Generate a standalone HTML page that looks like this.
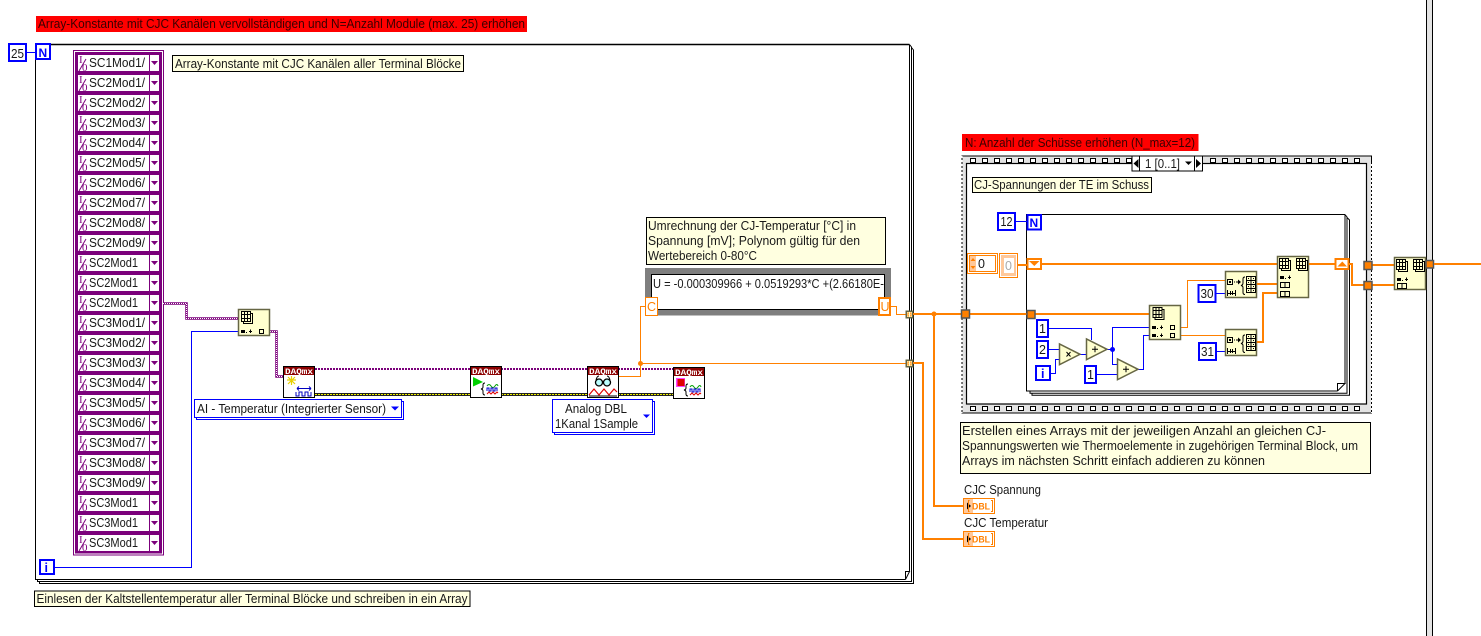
<!DOCTYPE html>
<html><head><meta charset="utf-8"><style>
html,body{margin:0;padding:0;background:#fff;width:1481px;height:636px;overflow:hidden}
svg{display:block}
text{font-family:"Liberation Sans",sans-serif;font-size:12.5px;fill:#181818}
.d{font-family:"Liberation Mono",monospace;font-size:8.5px;font-weight:bold;fill:#fff}
.io{font-family:"Liberation Serif",serif;font-size:11px;fill:#7b007b}
.r{fill:#3a0000}
.c{fill:#fff;stroke:#0000ff;stroke-width:2}
.n{fill:#ffffcf;stroke:#666644;stroke-width:1.5}
.cm{fill:#ffffe0;stroke:#000;stroke-width:1}
.o{fill:none;stroke:#ff8000}
.b{fill:none;stroke:#0000ff;stroke-width:1}
.k{fill:none;stroke:#000;stroke-width:1}
.t{fill:#ff8000;stroke:#555;stroke-width:1.5}
</style></head><body>
<svg width="1481" height="636" viewBox="0 0 1481 636" xmlns="http://www.w3.org/2000/svg">
<defs>
<g id="row"><rect x="78" y="55" width="81" height="16" fill="#fff"/><path d="M149.500 55v16" stroke="#7b007b"/><path d="M151 61h7l-3.500 4z" fill="#7b007b"/><path d="M79 71L86 59" stroke="#7b007b"/></g>
<g id="arr"><rect x="2.500" y="2.500" width="9" height="10" fill="#ffffcf" stroke="#000"/><rect x=".5" y=".5" width="9" height="10" fill="#ffffcf" stroke="#000"/><path d="M3.500 .5v10M6.500 .5v10M.5 3.500h9M.5 7.500h9" stroke="#000"/></g>
<g id="ins"><rect x="0" y="0" width="4" height="3" fill="#000"/><rect x="5" y="2" width="1" height="1" fill="#000"/><path d="M8 1.500h3M9.500 -.5v3.500" stroke="#000"/></g>
<g id="res"><rect x="2.500" y="8.500" width="5" height="5" fill="none" stroke="#000"/><rect x="4" y="10" width="2" height="2"/><path d="M9 11h1M11 11h3" stroke="#000"/><path d="M13 8.500l3 2.500-3 2.500z"/><path d="M2.500 19v6M2.500 22.500h8M10.500 19v6M5.500 20v4M7.500 20v4" stroke="#000" fill="none"/><path d="M20 6q-2 0-2 2v4q0 2-2 2.500q2 .5 2 2v5q0 2 2 2" stroke="#000" fill="none"/><rect x="21.500" y="5.500" width="9" height="16" fill="#ffffcf" stroke="#000"/><path d="M26 5.500v16M21.500 9.500h9M21.500 13.500h9M21.500 17.500h9" stroke="#000"/><rect x="23" y="7" width="1" height="1"/><rect x="28" y="7" width="1" height="1"/><rect x="23" y="11" width="1" height="1"/><rect x="28" y="11" width="1" height="1"/><rect x="23" y="15" width="1" height="1"/><rect x="28" y="15" width="1" height="1"/><rect x="23" y="19" width="1" height="1"/><rect x="28" y="19" width="1" height="1"/></g>
<g id="wav"><path d="M-6 1q-2 0-2 2v2q0 1.500-2 2q2 .5 2 2v2q0 2 2 2" stroke="#000" fill="none"/><path d="M-4 4q2-3 4 0t4 0 3 0" stroke="#00a000" fill="none"/><path d="M-4 9v-3h2v3h2v-3h2v3h2v-3h2v3" stroke="#0000d0" fill="none"/><path d="M-4 12l2-2 2 2 2-2 2 2 2-2 1 1" stroke="#e00000" fill="none"/></g>
<g id="tn"><rect x=".75" y=".75" width="6.500" height="6.500" fill="#ffffcf" stroke="#666644" stroke-width="1.500"/><path d="M3.500 2.500h-1v3h1M4.500 2.500h1v3h-1" stroke="#ff8000" fill="none"/></g>
</defs>

<!-- top red comment -->
<rect x="36" y="16" width="491" height="16" fill="#ff0000"/>
<text class="r" x="38" y="28" textLength="487" lengthAdjust="spacingAndGlyphs">Array-Konstante mit CJC Kanälen vervollständigen und N=Anzahl Module (max. 25) erhöhen</text>

<!-- far right band -->
<rect x="1426" y="0" width="7" height="636" fill="#e3e3e3"/>
<path d="M1426.500 0V636M1432.500 0V636" stroke="#000"/>

<!-- for loop frame -->
<path d="M909.500 44.500H35.500V579.500H905.500" class="k" stroke-width="1.500"/>
<path d="M909.500 44.500V571.500M909.500 44.500L911.500 47V581.500H37.500V579.500M911.500 47.500L913.500 50V583.500H39.500V581.500M905.500 579.500V571.500H909.500L905.500 579.500" class="k" stroke-width="1"/>
<path d="M35.500 44.500H909.500" stroke="#000" stroke-width="1.500"/>

<!-- N terminal and count -->
<rect x="9" y="44" width="17" height="17" class="c"/>
<text x="11" y="58" textLength="13" lengthAdjust="spacingAndGlyphs">25</text>
<path d="M26 52.500h10" class="b"/>
<rect x="36" y="44" width="14" height="15" fill="#fff" class="c"/>
<text x="38.500" y="57" style="font-weight:bold;fill:#0000ff;font-size:12px">N</text>

<!-- array constant -->
<rect x="73.500" y="50.500" width="90" height="504.500" fill="#fff" stroke="#7b007b"/>
<rect x="75" y="52" width="87" height="501.500" fill="#7b007b"/>
<g><use href="#row"/><text class="io" x="79" y="63">I</text><text class="io" x="82" y="71">0</text><text x="89" y="67" textLength="56" lengthAdjust="spacingAndGlyphs">SC1Mod1/</text></g>
<g transform="translate(0,20)"><use href="#row"/><text class="io" x="79" y="63">I</text><text class="io" x="82" y="71">0</text><text x="89" y="67" textLength="56" lengthAdjust="spacingAndGlyphs">SC2Mod1/</text></g>
<g transform="translate(0,40)"><use href="#row"/><text class="io" x="79" y="63">I</text><text class="io" x="82" y="71">0</text><text x="89" y="67" textLength="56" lengthAdjust="spacingAndGlyphs">SC2Mod2/</text></g>
<g transform="translate(0,60)"><use href="#row"/><text class="io" x="79" y="63">I</text><text class="io" x="82" y="71">0</text><text x="89" y="67" textLength="56" lengthAdjust="spacingAndGlyphs">SC2Mod3/</text></g>
<g transform="translate(0,80)"><use href="#row"/><text class="io" x="79" y="63">I</text><text class="io" x="82" y="71">0</text><text x="89" y="67" textLength="56" lengthAdjust="spacingAndGlyphs">SC2Mod4/</text></g>
<g transform="translate(0,100)"><use href="#row"/><text class="io" x="79" y="63">I</text><text class="io" x="82" y="71">0</text><text x="89" y="67" textLength="56" lengthAdjust="spacingAndGlyphs">SC2Mod5/</text></g>
<g transform="translate(0,120)"><use href="#row"/><text class="io" x="79" y="63">I</text><text class="io" x="82" y="71">0</text><text x="89" y="67" textLength="56" lengthAdjust="spacingAndGlyphs">SC2Mod6/</text></g>
<g transform="translate(0,140)"><use href="#row"/><text class="io" x="79" y="63">I</text><text class="io" x="82" y="71">0</text><text x="89" y="67" textLength="56" lengthAdjust="spacingAndGlyphs">SC2Mod7/</text></g>
<g transform="translate(0,160)"><use href="#row"/><text class="io" x="79" y="63">I</text><text class="io" x="82" y="71">0</text><text x="89" y="67" textLength="56" lengthAdjust="spacingAndGlyphs">SC2Mod8/</text></g>
<g transform="translate(0,180)"><use href="#row"/><text class="io" x="79" y="63">I</text><text class="io" x="82" y="71">0</text><text x="89" y="67" textLength="56" lengthAdjust="spacingAndGlyphs">SC2Mod9/</text></g>
<g transform="translate(0,200)"><use href="#row"/><text class="io" x="79" y="63">I</text><text class="io" x="82" y="71">0</text><text x="89" y="67" textLength="49" lengthAdjust="spacingAndGlyphs">SC2Mod1</text></g>
<g transform="translate(0,220)"><use href="#row"/><text class="io" x="79" y="63">I</text><text class="io" x="82" y="71">0</text><text x="89" y="67" textLength="49" lengthAdjust="spacingAndGlyphs">SC2Mod1</text></g>
<g transform="translate(0,240)"><use href="#row"/><text class="io" x="79" y="63">I</text><text class="io" x="82" y="71">0</text><text x="89" y="67" textLength="49" lengthAdjust="spacingAndGlyphs">SC2Mod1</text></g>
<g transform="translate(0,260)"><use href="#row"/><text class="io" x="79" y="63">I</text><text class="io" x="82" y="71">0</text><text x="89" y="67" textLength="56" lengthAdjust="spacingAndGlyphs">SC3Mod1/</text></g>
<g transform="translate(0,280)"><use href="#row"/><text class="io" x="79" y="63">I</text><text class="io" x="82" y="71">0</text><text x="89" y="67" textLength="56" lengthAdjust="spacingAndGlyphs">SC3Mod2/</text></g>
<g transform="translate(0,300)"><use href="#row"/><text class="io" x="79" y="63">I</text><text class="io" x="82" y="71">0</text><text x="89" y="67" textLength="56" lengthAdjust="spacingAndGlyphs">SC3Mod3/</text></g>
<g transform="translate(0,320)"><use href="#row"/><text class="io" x="79" y="63">I</text><text class="io" x="82" y="71">0</text><text x="89" y="67" textLength="56" lengthAdjust="spacingAndGlyphs">SC3Mod4/</text></g>
<g transform="translate(0,340)"><use href="#row"/><text class="io" x="79" y="63">I</text><text class="io" x="82" y="71">0</text><text x="89" y="67" textLength="56" lengthAdjust="spacingAndGlyphs">SC3Mod5/</text></g>
<g transform="translate(0,360)"><use href="#row"/><text class="io" x="79" y="63">I</text><text class="io" x="82" y="71">0</text><text x="89" y="67" textLength="56" lengthAdjust="spacingAndGlyphs">SC3Mod6/</text></g>
<g transform="translate(0,380)"><use href="#row"/><text class="io" x="79" y="63">I</text><text class="io" x="82" y="71">0</text><text x="89" y="67" textLength="56" lengthAdjust="spacingAndGlyphs">SC3Mod7/</text></g>
<g transform="translate(0,400)"><use href="#row"/><text class="io" x="79" y="63">I</text><text class="io" x="82" y="71">0</text><text x="89" y="67" textLength="56" lengthAdjust="spacingAndGlyphs">SC3Mod8/</text></g>
<g transform="translate(0,420)"><use href="#row"/><text class="io" x="79" y="63">I</text><text class="io" x="82" y="71">0</text><text x="89" y="67" textLength="56" lengthAdjust="spacingAndGlyphs">SC3Mod9/</text></g>
<g transform="translate(0,440)"><use href="#row"/><text class="io" x="79" y="63">I</text><text class="io" x="82" y="71">0</text><text x="89" y="67" textLength="49" lengthAdjust="spacingAndGlyphs">SC3Mod1</text></g>
<g transform="translate(0,460)"><use href="#row"/><text class="io" x="79" y="63">I</text><text class="io" x="82" y="71">0</text><text x="89" y="67" textLength="49" lengthAdjust="spacingAndGlyphs">SC3Mod1</text></g>
<g transform="translate(0,480)"><use href="#row"/><text class="io" x="79" y="63">I</text><text class="io" x="82" y="71">0</text><text x="89" y="67" textLength="49" lengthAdjust="spacingAndGlyphs">SC3Mod1</text></g>

<!-- comment -->
<rect x="172.500" y="55.500" width="291" height="16" class="cm"/>
<text x="175" y="68" textLength="286" lengthAdjust="spacingAndGlyphs">Array-Konstante mit CJC Kanälen aller Terminal Blöcke</text>

<!-- i terminal + blue wire -->
<path d="M238 331.500H191.500V567.500H54" class="b"/>
<rect x="40" y="560" width="14" height="14" class="c"/>
<text x="44.500" y="572" style="font-weight:bold;fill:#0000ff">i</text>

<!-- purple wires -->
<g fill="none">
<path d="M163 303.500H186.500V318.500H238M270 331.500H276.500V376.500H283" stroke="#7b007b" stroke-width="2.500"/>
<path d="M163 303.500H186.500V318.500H238M270 331.500H276.500V376.500H283" stroke="#fff" stroke-width="1" stroke-dasharray="1 1"/>
<path d="M315 369H673" stroke="#7b007b" stroke-width="2" stroke-dasharray="2 1"/>
<path d="M315 394.500H673" stroke="#222" stroke-width="3"/>
<path d="M315 394.500H673" stroke="#f0f000" stroke-width="1" stroke-dasharray="2 1"/>
</g>

<!-- build array 1 -->
<rect x="238.500" y="309.500" width="31" height="26" class="n"/>
<use href="#arr" x="241" y="311"/>
<use href="#ins" x="241" y="330"/>
<rect x="259.500" y="329.500" width="4" height="4" fill="none" stroke="#000"/>

<!-- DAQmx 1 -->
<rect x="283.500" y="366.500" width="31" height="31" fill="#fff" stroke="#000"/>
<rect x="284" y="367" width="30" height="8" fill="#8c0000"/>
<text class="d" x="285" y="374" textLength="28" lengthAdjust="spacingAndGlyphs">DAQmx</text>
<path d="M287 380h9M291.500 376v9M288 377l7 7M295 377l-7 7" stroke="#e8d000" stroke-width="1.200"/>
<path d="M296 392v4h3v-4h3v4h3v-4h3v4h3v-4" stroke="#0000c0" fill="none"/>
<path d="M297 388.500h14M297 388.500l2-2M297 388.500l2 2M311 388.500l-2-2M311 388.500l-2 2" stroke="#0000c0" fill="none"/>

<!-- dropdown AI -->
<rect x="196.500" y="401.500" width="207" height="18" fill="#fff" stroke="#0000ff"/>
<rect x="194.500" y="399.500" width="207" height="18" fill="#fff" stroke="#0000ff"/>
<text x="197" y="413" textLength="189" lengthAdjust="spacingAndGlyphs">AI - Temperatur (Integrierter Sensor)</text>
<path d="M391 406.500h8l-4 4z" fill="#0000ff"/>

<!-- DAQmx 2 -->
<rect x="470.500" y="366.500" width="31" height="31" fill="#fff" stroke="#000"/>
<rect x="471" y="367" width="30" height="8" fill="#8c0000"/>
<text class="d" x="472" y="374" textLength="28" lengthAdjust="spacingAndGlyphs">DAQmx</text>
<path d="M473 377v9.500l10-4.500z" fill="#00d000"/>
<use href="#wav" x="491" y="382"/>

<!-- DAQmx 3 -->
<path d="M618 376.500H640.500V306.500H645" class="o" stroke-width="1"/>
<path d="M640.500 363.500H906" class="o" stroke-width="1"/>
<circle cx="640.500" cy="363.500" r="2.500" fill="#ff8000"/>
<rect x="587.500" y="366.500" width="31" height="31" fill="#fff" stroke="#000"/>
<rect x="588" y="367" width="30" height="8" fill="#8c0000"/>
<text class="d" x="589" y="374" textLength="28" lengthAdjust="spacingAndGlyphs">DAQmx</text>
<circle cx="599" cy="382.500" r="3.500" fill="#bff" stroke="#000" stroke-width="1.300"/>
<circle cx="607" cy="382.500" r="3.500" fill="#bff" stroke="#000" stroke-width="1.300"/>
<path d="M596 380q1-4 3-4M610 380q-1-4-3-4" stroke="#000" fill="none"/>
<path d="M589 395l5-6 5 6 5-6 5 6 5-6 3 3" stroke="#e00000" fill="none" stroke-width="1.200"/>
<path d="M589 396h28" stroke="#000"/>

<!-- dropdown 2 -->
<rect x="554.500" y="401.500" width="100" height="33" fill="#fff" stroke="#0000ff"/>
<rect x="552.500" y="399.500" width="100" height="33" fill="#fff" stroke="#0000ff"/>
<text x="565" y="413" textLength="62" lengthAdjust="spacingAndGlyphs">Analog DBL</text>
<text x="555" y="428" textLength="83" lengthAdjust="spacingAndGlyphs">1Kanal 1Sample</text>
<path d="M643 414.500h7l-3.500 3.500z" fill="#0000ff"/>

<!-- DAQmx 4 -->
<rect x="673.500" y="367.500" width="31" height="31" fill="#fff" stroke="#000"/>
<rect x="674" y="368" width="30" height="8" fill="#8c0000"/>
<text class="d" x="675" y="375" textLength="28" lengthAdjust="spacingAndGlyphs">DAQmx</text>
<rect x="676" y="378" width="9" height="9" fill="#ff40ff"/><rect x="677.500" y="379" width="7" height="7" fill="#e00000"/>
<use href="#wav" x="694" y="383"/>

<!-- comment Umrechnung -->
<rect x="646.500" y="217.500" width="239" height="47" class="cm"/>
<text x="648" y="230" textLength="208" lengthAdjust="spacingAndGlyphs">Umrechnung der CJ-Temperatur [°C] in</text>
<text x="648" y="245" textLength="212" lengthAdjust="spacingAndGlyphs">Spannung [mV]; Polynom gültig für den</text>
<text x="648" y="260" textLength="109" lengthAdjust="spacingAndGlyphs">Wertebereich 0-80°C</text>

<!-- formula node -->
<rect x="645" y="268" width="246" height="47.500" fill="#7f7f7f"/>
<rect x="651.500" y="274.500" width="233" height="35" fill="#fff" stroke="#000"/>
<text x="653" y="288" textLength="231" lengthAdjust="spacingAndGlyphs">U =  -0.000309966 + 0.0519293*C +(2.66180E-</text>
<rect x="645.500" y="297.500" width="12" height="18" fill="#fff" stroke="#ff8000"/>
<text x="647" y="311" style="fill:#ff8000">C</text>
<rect x="879" y="298" width="11" height="17" fill="#fff" stroke="#ff8000" stroke-width="2"/>
<text x="880.500" y="311" style="fill:#ff8000">U</text>
<path d="M891 306.500H896.500V314.500H906" class="o" stroke-width="1"/>

<use href="#tn" x="905.500" y="310.500"/>
<use href="#tn" x="905.500" y="359.500"/>

<!-- right wires -->
<path d="M913 314H962" class="o" stroke-width="2"/>
<path d="M934 314V506H964" class="o" stroke-width="2"/>
<path d="M913 363H923V539H964" class="o" stroke-width="2"/>
<circle cx="934" cy="314" r="2.500" fill="#ff8000"/>

<!-- indicators -->
<text x="964" y="494" textLength="77" lengthAdjust="spacingAndGlyphs">CJC Spannung</text>
<text x="964" y="527" textLength="84" lengthAdjust="spacingAndGlyphs">CJC Temperatur</text>
<g><rect x="963.500" y="498.500" width="31" height="15" fill="#fff" stroke="#ff8000"/><rect x="964" y="499" width="9" height="14" fill="#ffc89a"/><path d="M967 502.500l4 3.500-4 3.500z" fill="#000"/><path d="M969.500 500.500h-1v11h1M991 500.500h1.500v11h-1.500" fill="none" stroke="#ff8000"/><text x="972" y="509.500" textLength="18" lengthAdjust="spacingAndGlyphs" style="font-size:9px;font-weight:bold;fill:#ff8000">DBL</text></g>
<rect x="963.500" y="531.500" width="31" height="15" fill="#fff" stroke="#ff8000"/><rect x="964" y="532" width="9" height="14" fill="#ffc89a"/><path d="M967 535.500l4 3.500-4 3.500z" fill="#000"/><path d="M969.500 533.500h-1v11h1M991 533.500h1.500v11h-1.500" fill="none" stroke="#ff8000"/><text x="972" y="542.500" textLength="18" lengthAdjust="spacingAndGlyphs" style="font-size:9px;font-weight:bold;fill:#ff8000">DBL</text>

<!-- red comment 2 -->
<rect x="962" y="134" width="236.500" height="17" fill="#ff0000"/>
<text class="r" x="965" y="147" textLength="230" lengthAdjust="spacingAndGlyphs">N: Anzahl der Schüsse erhöhen (N_max=12)</text>

<!-- sequence frame -->
<rect x="962" y="156" width="409.500" height="257" fill="#e3e3e3" stroke="#000" stroke-width="1"/>
<path d="M962 156V413M1371.500 164V413" stroke="#fff" stroke-width="1" stroke-dasharray="2 2"/>
<rect x="966.500" y="163.500" width="400" height="240.500" fill="#fff" stroke="#000" stroke-width="1.200"/>
<path d="M970.500 158.500h5v4h-5zM982.500 158.500h5v4h-5zM994.500 158.500h5v4h-5zM1006.500 158.500h5v4h-5zM1018.500 158.500h5v4h-5zM1030.500 158.500h5v4h-5zM1042.500 158.500h5v4h-5zM1054.500 158.500h5v4h-5zM1066.500 158.500h5v4h-5zM1078.500 158.500h5v4h-5zM1090.500 158.500h5v4h-5zM1102.500 158.500h5v4h-5zM1114.500 158.500h5v4h-5zM1126.500 158.500h5v4h-5zM1210.500 158.500h5v4h-5zM1222.500 158.500h5v4h-5zM1234.500 158.500h5v4h-5zM1246.500 158.500h5v4h-5zM1258.500 158.500h5v4h-5zM1270.500 158.500h5v4h-5zM1282.500 158.500h5v4h-5zM1294.500 158.500h5v4h-5zM1306.500 158.500h5v4h-5zM1318.500 158.500h5v4h-5zM1330.500 158.500h5v4h-5zM1342.500 158.500h5v4h-5zM1354.500 158.500h5v4h-5z" fill="#fff" stroke="#000"/>
<path d="M970.500 406.500h5v4h-5zM982.500 406.500h5v4h-5zM994.500 406.500h5v4h-5zM1006.500 406.500h5v4h-5zM1018.500 406.500h5v4h-5zM1030.500 406.500h5v4h-5zM1042.500 406.500h5v4h-5zM1054.500 406.500h5v4h-5zM1066.500 406.500h5v4h-5zM1078.500 406.500h5v4h-5zM1090.500 406.500h5v4h-5zM1102.500 406.500h5v4h-5zM1114.500 406.500h5v4h-5zM1126.500 406.500h5v4h-5zM1138.500 406.500h5v4h-5zM1150.500 406.500h5v4h-5zM1162.500 406.500h5v4h-5zM1174.500 406.500h5v4h-5zM1186.500 406.500h5v4h-5zM1198.500 406.500h5v4h-5zM1210.500 406.500h5v4h-5zM1222.500 406.500h5v4h-5zM1234.500 406.500h5v4h-5zM1246.500 406.500h5v4h-5zM1258.500 406.500h5v4h-5zM1270.500 406.500h5v4h-5zM1282.500 406.500h5v4h-5zM1294.500 406.500h5v4h-5zM1306.500 406.500h5v4h-5zM1318.500 406.500h5v4h-5zM1330.500 406.500h5v4h-5zM1342.500 406.500h5v4h-5zM1354.500 406.500h5v4h-5z" fill="#fff" stroke="#000"/>

<!-- selector -->
<rect x="1132" y="156" width="70.500" height="15" fill="#fff" stroke="#000"/>
<path d="M1139.500 156v15M1194.500 156v15" stroke="#000"/>
<path d="M1133.500 163.500l5-4.500v9z" fill="#000"/>
<path d="M1201 163.500l-5-4.500v9z" fill="#000"/>
<text x="1145" y="168" textLength="35" lengthAdjust="spacingAndGlyphs">1 [0..1]</text>
<path d="M1185 161.500h7l-3.500 3.500z" fill="#000"/>

<!-- comment CJ -->
<rect x="972.500" y="177.500" width="179" height="15" class="cm"/>
<text x="974" y="189" textLength="175" lengthAdjust="spacingAndGlyphs">CJ-Spannungen der TE im Schuss</text>

<!-- inner for loop -->
<path d="M1345 214.500H1026.500V391H1337.500" class="k" stroke-width="1.200"/>
<path d="M1345 214.500V383.500M1345 214.500L1347 217V393.300H1030V391M1347 217.500L1349.500 220V395.300H1032V393.300M1337.500 391V383.500H1345L1337.500 391" class="k"/>

<!-- 12 and N -->
<rect x="998" y="213" width="17" height="17" class="c"/>
<text x="1000.500" y="226" textLength="12" lengthAdjust="spacingAndGlyphs">12</text>
<path d="M1015 221.500h12" class="b"/>
<rect x="1027.500" y="215" width="13.500" height="14.500" class="c"/>
<text x="1029.500" y="227" style="font-weight:bold;fill:#0000ff;font-size:12px">N</text>

<!-- numeric -->
<rect x="967.500" y="253.500" width="30" height="20" fill="#fff" stroke="#ff8000"/>
<rect x="969.500" y="255.500" width="26" height="16" fill="#fff" stroke="#ff8000"/>
<rect x="970" y="256" width="6" height="15" fill="#ffc89a"/>
<path d="M970.500 261h5l-2.500-3zM970.500 266h5l-2.500 3z" fill="#ff8000"/>
<text x="978" y="268">0</text>
<rect x="999.500" y="253.500" width="18" height="24" fill="#fff" stroke="#ff8000"/>
<rect x="1001" y="255" width="15" height="21" fill="#ffc89a"/>
<rect x="1004" y="258" width="10" height="15" fill="#fff"/>
<text x="1005" y="270" style="fill:#aaa">0</text>

<!-- orange main wires -->
<path d="M1018 265H1027" class="o" stroke-width="2"/>
<path d="M1041 264H1278" class="o" stroke-width="2"/>
<path d="M960 314H1150" class="o" stroke-width="2"/>
<rect x="1027.500" y="259" width="13.500" height="10" fill="#fff" stroke="#ff8000" stroke-width="2"/>
<path d="M1029 261h10.500l-5.200 5z" fill="#ff8000"/>
<rect x="961.500" y="310" width="8" height="8" class="t"/>
<rect x="1027" y="310.500" width="8" height="8" class="t"/>

<!-- blue wires inner -->
<path d="M1049 328.500H1091.500V340M1049 349.500H1059M1051 373.500H1055.500V359.500H1059M1080 354.500H1086M1107 349.500H1112.500M1112.500 349.500V327.500H1149M1112.500 349.500V364.500H1117M1097 374.500H1117M1138 369.500H1143.500V335.500H1149M1216 293.500H1225M1217 351.500H1225" class="b"/>
<circle cx="1112.500" cy="349.500" r="2.500" fill="#0000ff"/>

<!-- inner constants -->
<rect x="1037" y="320" width="11" height="17" class="c"/>
<text x="1039" y="333">1</text>
<rect x="1037" y="341" width="11" height="17" class="c"/>
<text x="1039" y="354">2</text>
<rect x="1036" y="366" width="14" height="14" class="c"/>
<text x="1041" y="378" style="font-weight:bold;fill:#0000ff">i</text>
<rect x="1085" y="366" width="11" height="17" class="c"/>
<text x="1087" y="379">1</text>
<rect x="1198.500" y="285" width="17" height="17" class="c"/>
<text x="1200.500" y="298" textLength="13" lengthAdjust="spacingAndGlyphs">30</text>
<rect x="1199" y="343" width="17" height="17" class="c"/>
<text x="1201" y="356" textLength="13" lengthAdjust="spacingAndGlyphs">31</text>

<!-- primitives -->
<path d="M1059.500 344V364.700L1080 354.300z" class="n"/>
<path d="M1066.500 352l4 4.500M1070.500 352l-4 4.500" stroke="#000"/>
<path d="M1086.500 339V359.700L1107 349.300z" class="n"/>
<path d="M1092 349.300h6M1095 346.300v6" stroke="#000"/>
<path d="M1117.500 359V379.700L1138 369.300z" class="n"/>
<path d="M1123 369.300h6M1126 366.300v6" stroke="#000"/>

<!-- build array mid -->
<path d="M1181 327.500H1187.500V280.500H1226M1181 335.500H1226" class="o" stroke-width="1"/>
<rect x="1149.500" y="305.500" width="31" height="34" class="n"/>
<use href="#arr" x="1152.500" y="307"/>
<use href="#ins" x="1152" y="326"/>
<use href="#ins" x="1152" y="334"/>
<rect x="1170.500" y="325.500" width="4" height="4" fill="none" stroke="#000"/>
<rect x="1170.500" y="333.500" width="4" height="4" fill="none" stroke="#000"/>

<!-- reshape nodes -->
<rect x="1225.500" y="271.500" width="31" height="26" class="n"/>
<use href="#res" x="1225" y="271"/>
<rect x="1225.500" y="329.500" width="31" height="26" class="n"/>
<use href="#res" x="1225" y="329"/>
<path d="M1257 284H1278M1257 342H1263V293H1278" class="o" stroke-width="2"/>

<!-- build right -->
<rect x="1277.500" y="256.500" width="31" height="41" class="n"/>
<use href="#arr" x="1279" y="258"/>
<use href="#arr" x="1296" y="258"/>
<use href="#ins" x="1280" y="276"/>
<rect x="1280.500" y="282.500" width="9" height="5" fill="none" stroke="#000"/><path d="M1285 282.500v5" stroke="#000"/>
<rect x="1280.500" y="291.500" width="9" height="5" fill="none" stroke="#000"/><path d="M1285 291.500v5" stroke="#000"/>

<path d="M1309 264H1335" class="o" stroke-width="2"/>
<rect x="1335.500" y="259" width="13" height="10" fill="#fff" stroke="#ff8000" stroke-width="2"/>
<path d="M1337.500 266.500h9.500l-4.700-5z" fill="#ff8000"/>
<path d="M1349 264H1352V285H1364M1371 265H1395M1371 285H1395" class="o" stroke-width="2"/>
<rect x="1364" y="261.500" width="8" height="8" class="t"/>
<rect x="1364" y="281.500" width="8" height="8" class="t"/>

<!-- far right node -->
<rect x="1394.500" y="257.500" width="31" height="32" class="n"/>
<use href="#arr" x="1396" y="259"/>
<use href="#arr" x="1413" y="259"/>
<use href="#ins" x="1397" y="278"/>
<rect x="1397.500" y="283.500" width="9" height="5" fill="none" stroke="#000"/><path d="M1402 283.500v5" stroke="#000"/>
<rect x="1426" y="260.500" width="7.500" height="7.500" class="t"/>
<path d="M1434 264H1481" class="o" stroke-width="2"/>

<!-- big comment -->
<rect x="960.500" y="422.500" width="410" height="51" class="cm"/>
<text x="962" y="435" textLength="364" lengthAdjust="spacingAndGlyphs">Erstellen eines Arrays mit der jeweiligen Anzahl an gleichen CJ-</text>
<text x="962" y="450" textLength="396" lengthAdjust="spacingAndGlyphs">Spannungswerten wie Thermoelemente in zugehörigen Terminal Block, um</text>
<text x="962" y="465" textLength="303" lengthAdjust="spacingAndGlyphs">Arrays im nächsten Schritt einfach addieren zu können</text>

<!-- bottom comment -->
<rect x="34.500" y="591" width="435.500" height="15.500" class="cm"/>
<text x="36.500" y="603" textLength="431" lengthAdjust="spacingAndGlyphs">Einlesen der Kaltstellentemperatur aller Terminal Blöcke und schreiben in ein Array</text>
</svg>
</body></html>
